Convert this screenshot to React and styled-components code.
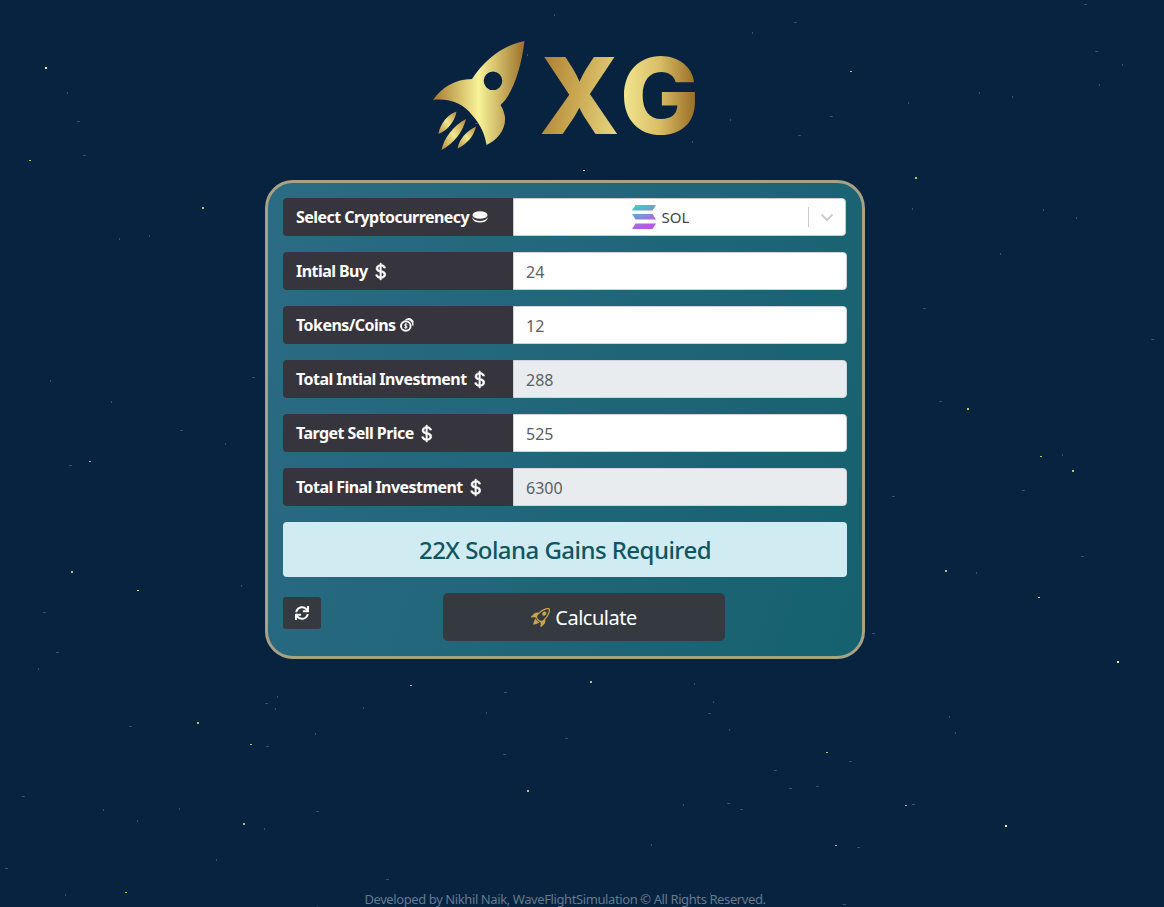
import styled, { createGlobalStyle } from "styled-components"
import { BsCurrencyDollar, BsRocketTakeoff } from "react-icons/bs"
import { FaSync } from "react-icons/fa"

const GlobalStyle = createGlobalStyle`
  html, body {
    margin: 0;
    height: 907px;
    overflow: hidden;
    background: #072340;
  }
  * { box-sizing: border-box; }
`

// bright stars read off the picture, the faint ones are scattered from a seed
const BRIGHT = [
  [45, 67], [29, 160], [202, 207], [89, 461], [71, 571], [137, 590], [197, 722], [250, 744],
  [527, 790], [905, 805], [1005, 825], [835, 845], [590, 681], [410, 685], [945, 570],
  [1038, 597], [1072, 470], [1040, 456], [915, 177], [850, 71], [1117, 661], [125, 892],
  [243, 823], [826, 752], [967, 408], [583, 170],
]

const faintStars = () => {
  let seed = 4711
  const next = () => {
    seed = (seed * 16807) % 2147483647
    return seed / 2147483647
  }
  const list = []
  for (let i = 0; i < 120; i++) {
    list.push([Math.round(next() * 1164), Math.round(next() * 907), next() > 0.5])
  }
  return list
}

const Stars = () => (
  <Sky viewBox="0 0 1164 907">
    {faintStars().map(([x, y, flat], i) => (
      <rect key={i} x={x} y={y} width={flat ? 3 : 1} height={flat ? 1 : 2} fill="#5d7688" opacity="0.55" />
    ))}
    {BRIGHT.map(([x, y], i) => (
      <rect key={i} x={x} y={y} width="2" height={i % 2 ? 1 : 2} fill={i % 5 === 0 ? "#e6efb0" : "#a9cc52"} />
    ))}
  </Sky>
)

const Rocket = () => (
  <RocketSvg viewBox="0 0 290 130">
    <defs>
      <linearGradient id="gold" x1="0" y1="0" x2="1" y2="0">
        <stop offset="0" stopColor="#a67a2e" />
        <stop offset="0.5" stopColor="#f8f298" />
        <stop offset="1" stopColor="#9c7029" />
      </linearGradient>
      <linearGradient id="flame" x1="0" y1="1" x2="1" y2="0">
        <stop offset="0" stopColor="#b58c3c" />
        <stop offset="0.5" stopColor="#f3e88e" />
        <stop offset="1" stopColor="#b2873a" />
      </linearGradient>
    </defs>
    <path
      fill="url(#gold)"
      fillRule="evenodd"
      d="M105.5 11 C85 15 66 29 53 49 C36 49 22 58 14 70 C30 68 45 74 53 85 C62 95 66 105 67.500 115 C78 110 87 100 86 87 C85 81 83 77 81.500 75 C93 65 102 40 105.500 11 Z M74 41.500 A9.300 9.300 0 1 0 74 60.100 A9.300 9.300 0 1 0 74 41.500 Z"
    />
    <path fill="url(#flame)" d="M37.500 81.500 C28 85 21 94 19.500 104 C29 100 36 91 37.500 81.500 Z" />
    <path fill="url(#flame)" d="M47 89 C34 96 25 108 22.500 120 C34 114 44 102 47 89 Z" />
    <path fill="url(#flame)" d="M57 96.500 C47 101 40 110 38.500 118.500 C48 114 55 106 57 96.500 Z" />
  </RocketSvg>
)

const CoinStack = () => (
  <svg width="16" height="12" viewBox="0 0 16 12" fill="#fff">
    <ellipse cx="8" cy="4" rx="7.500" ry="3.800" />
    <path d="M0.500 6.300 C1.500 9 4.500 10 8 10 C11.500 10 14.500 9 15.500 6.300 L15.500 8 C14.500 10.500 11.500 11.500 8 11.500 C4.500 11.500 1.500 10.500 0.500 8 Z" />
  </svg>
)

const TokenCoins = () => (
  <TokenSvg width="14" height="14" viewBox="0 0 14 14" fill="none" stroke="#fff">
    <circle cx="5.800" cy="8" r="4.800" strokeWidth="1.900" />
    <path d="M5.500 1.800 A5.300 5.300 0 0 1 12.800 7.500 M7.600 0.800 A5 5 0 0 1 13.300 4.500" strokeWidth="1.500" />
    <path d="M7.300 6.500 C6.500 5.700 4.400 6 4.500 7.200 C4.600 8.500 7.200 7.600 7.200 9 C7.200 10.100 5 10.300 4.300 9.500 M5.800 5.300 V10.700" strokeWidth="1" />
  </TokenSvg>
)

const SolanaMark = () => (
  <svg width="26" height="26" viewBox="0 0 26 26">
    <defs>
      <linearGradient id="sol" x1="0" y1="0" x2="0.4" y2="1">
        <stop offset="0" stopColor="#2fdcc0" />
        <stop offset="0.5" stopColor="#7b93d8" />
        <stop offset="1" stopColor="#bb55e6" />
      </linearGradient>
    </defs>
    <path fill="url(#sol)" d="M4.500 1 H25 L21.500 6.500 H1 Z M1 10 H21.500 L25 15.500 H4.500 Z M4.500 19.500 H25 L21.500 25 H1 Z" />
  </svg>
)

const ROWS = [
  { label: "Intial Buy", icon: <Dollar />, value: "24" },
  { label: "Tokens/Coins", icon: <TokenCoins />, value: "12" },
  { label: "Total Intial Investment", icon: <Dollar />, value: "288", locked: true },
  { label: "Target Sell Price", icon: <Dollar />, value: "525" },
  { label: "Total Final Investment", icon: <Dollar />, value: "6300", locked: true },
]

function Dollar() {
  return <BoldDollar size={19} />
}

export default function App() {
  return (
    <Page>
      <GlobalStyle />
      <Stars />
      <Logo>
        <Rocket />
        <LogoText>
          <LogoX>X</LogoX>
          <LogoG>G</LogoG>
        </LogoText>
      </Logo>

      <Card>
        <Row>
          <Label>Select Cryptocurrenecy<CoinStack /></Label>
          <Select>
            <SelectValue>
              <SolanaMark />
              SOL
            </SelectValue>
            <Separator />
            <Chevron viewBox="0 0 20 20">
              <path d="M4.500 7.500 L10 13 L15.500 7.500" />
            </Chevron>
          </Select>
        </Row>

        {ROWS.map((r) => (
          <Row key={r.label}>
            <Label>{r.label}{r.icon}</Label>
            <Input $locked={r.locked} defaultValue={r.value} readOnly={r.locked} />
          </Row>
        ))}

        <Alert>22X Solana Gains Required</Alert>

        <Actions>
          <ResetButton><FaSync size={14} /></ResetButton>
          <CalcWrap>
            <CalcButton>
              <BsRocketTakeoff size={19} color="#c9a44c" />
              Calculate
            </CalcButton>
          </CalcWrap>
        </Actions>
      </Card>

      <Footer>Developed by Nikhil Naik, WaveFlightSimulation © All Rights Reserved.</Footer>
    </Page>
  )
}

const Page = styled.div`
  position: relative;
  height: 907px;
  overflow: hidden;
  padding: 41px 34px 0 0;
  display: flex;
  flex-direction: column;
  align-items: center;
  font-family: "Noto Sans", "Open Sans", sans-serif;
`

const Sky = styled.svg`
  position: absolute;
  top: 0;
  left: 0;
  width: 1164px;
  height: 907px;
`

const Logo = styled.div`
  position: relative;
  display: flex;
  align-items: flex-start;
  height: 139px;
  width: 264px;
`

const RocketSvg = styled.svg`
  width: 290px;
  height: 130px;
  margin: -11px 0 0 -14px;
  flex: none;
`

const LogoText = styled.div`
  position: absolute;
  top: 0;
  left: 106px;
  display: flex;
  font-family: Inter, "Liberation Sans", sans-serif;
  font-weight: 800;
  font-size: 106px;
  line-height: 110px;
`

const LogoX = styled.span`
  background: linear-gradient(100deg, #a57a2f, #c9a650 45%, #eadb86);
  -webkit-background-clip: text;
  background-clip: text;
  color: transparent;
`

const LogoG = styled.span`
  background: linear-gradient(90deg, #f3ea92, #d9bd66 50%, #93661f);
  -webkit-background-clip: text;
  background-clip: text;
  color: transparent;
`

const Card = styled.div`
  position: relative;
  width: 600px;
  height: 479px;
  padding: 15px;
  border: 3px solid #a9a184;
  border-radius: 28px;
  background: linear-gradient(110deg, #2c6b84, #15616f);
  display: flex;
  flex-direction: column;
`

const Row = styled.div`
  display: flex;
  height: 38px;
  margin-bottom: 16px;
`

const Label = styled.div`
  width: 230px;
  flex: none;
  display: flex;
  align-items: center;
  gap: 3px;
  padding-left: 13px;
  background: #36343c;
  color: #fff;
  font-size: 16px;
  font-weight: 700;
  letter-spacing: -0.55px;
  border-radius: 4px 0 0 4px;
  white-space: nowrap;
`

const BoldDollar = styled(BsCurrencyDollar)`
  stroke: currentColor;
  stroke-width: 0.6px;
`

const TokenSvg = styled.svg`
  margin-left: 1px;
`

const Input = styled.input`
  flex: 1;
  min-width: 0;
  height: 38px;
  padding: 2px 12px 0;
  border: 1px solid #ced4da;
  border-radius: 0 4px 4px 0;
  background: ${(p) => (p.$locked ? "#e9ecef" : "#fff")};
  color: #5a6068;
  font-family: inherit;
  font-size: 16px;
  outline: none;
`

const Select = styled.div`
  width: 333px;
  display: flex;
  align-items: center;
  background: #fff;
  border: 1px solid #ccc;
  border-radius: 0 4px 4px 0;
  color: #444;
  font-size: 15px;
`

const SelectValue = styled.div`
  flex: 1;
  display: flex;
  align-items: center;
  justify-content: center;
  gap: 5px;
  padding-right: 2px;
`

const Separator = styled.span`
  width: 1px;
  height: 20px;
  background: #ccc;
`

const Chevron = styled.svg`
  width: 20px;
  height: 20px;
  margin: 0 8px;
  fill: none;
  stroke: #ccc;
  stroke-width: 2;
`

const Alert = styled.div`
  height: 55px;
  margin-bottom: 16px;
  display: flex;
  align-items: center;
  justify-content: center;
  background: #d0ecf2;
  border-radius: 4px;
  color: #0f5562;
  font-size: 24px;
  font-weight: 500;
  letter-spacing: -0.55px;
`

const Actions = styled.div`
  display: flex;
  align-items: flex-start;
`

const ResetButton = styled.button`
  width: 38px;
  height: 32px;
  margin-top: 4px;
  padding: 0;
  display: flex;
  align-items: center;
  justify-content: center;
  background: #343a40;
  border: none;
  border-radius: 3px;
  color: #fff;
`

const CalcWrap = styled.div`
  flex: 1;
  display: flex;
  justify-content: center;
`

const CalcButton = styled.button`
  width: 282px;
  height: 48px;
  display: flex;
  align-items: center;
  justify-content: center;
  gap: 5px;
  background: #343a40;
  border: none;
  border-radius: 5px;
  color: #fff;
  font-family: inherit;
  font-size: 20px;
  letter-spacing: -0.5px;
`

const Footer = styled.div`
  position: relative;
  margin-top: auto;
  height: 15px;
  color: #647a8e;
  font-size: 13px;
  letter-spacing: -0.4px;
  line-height: 15px;
  white-space: nowrap;
`
